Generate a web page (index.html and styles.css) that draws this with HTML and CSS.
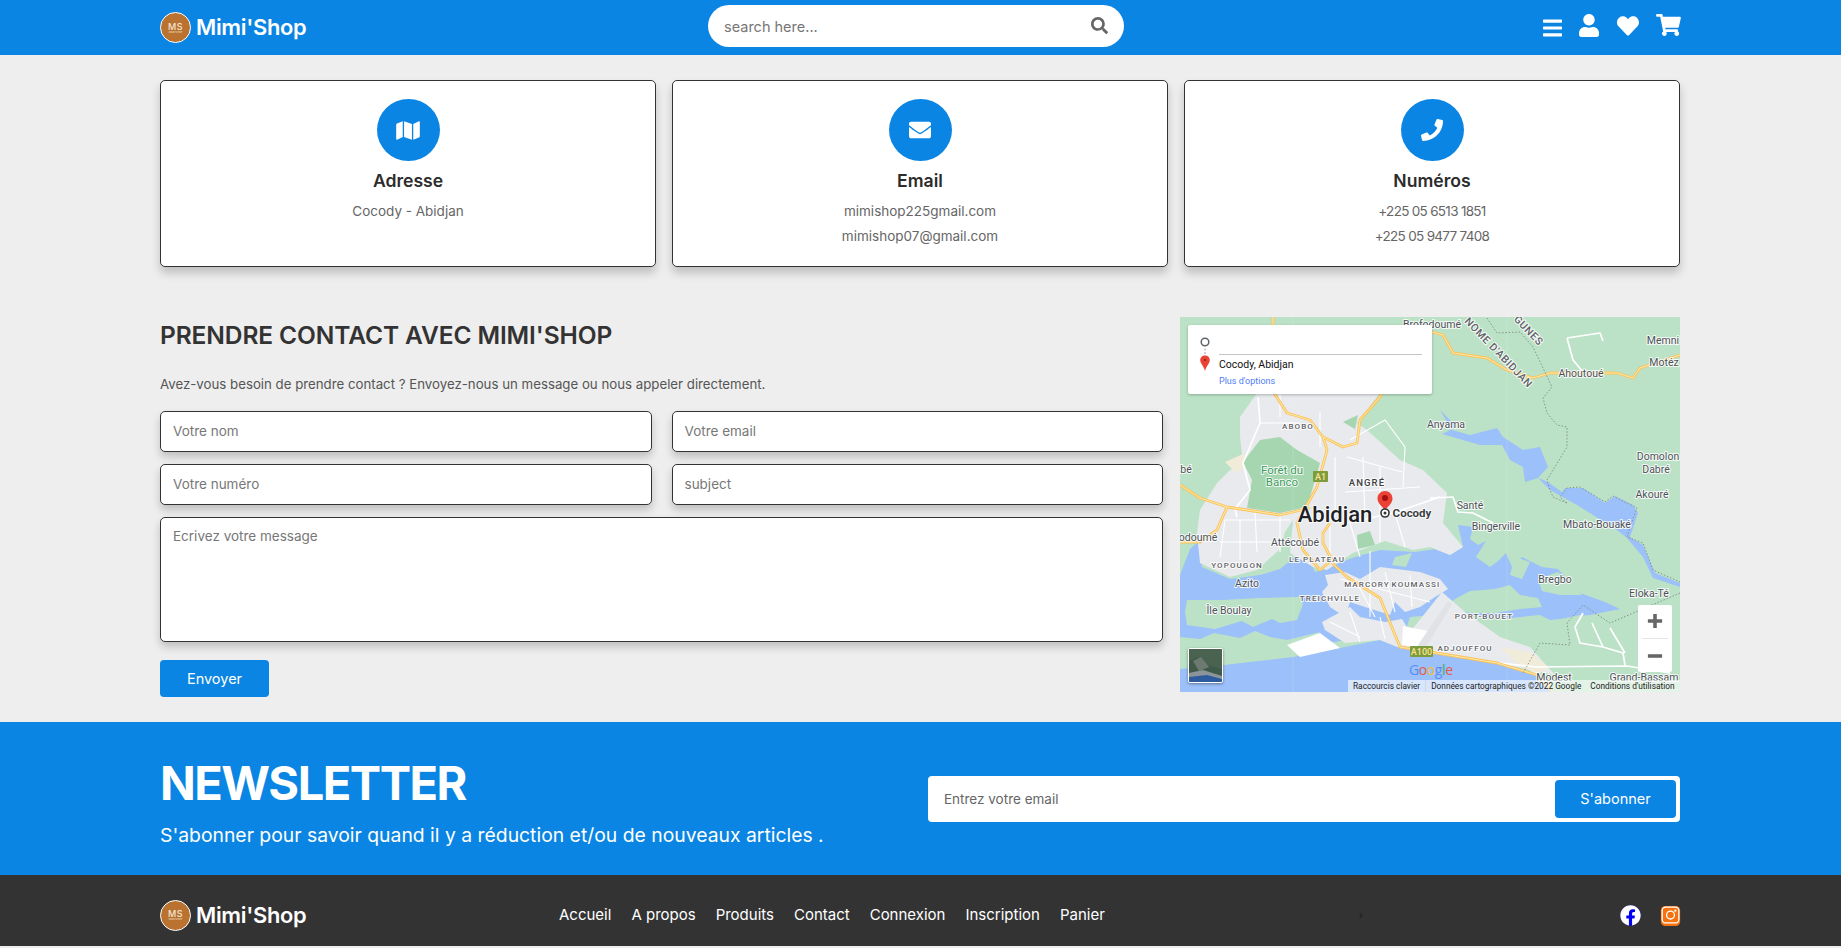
FILE: index.html
```html
<!DOCTYPE html>
<html lang="fr">
<head>
<meta charset="utf-8">
<title>Mimi'Shop - Contact</title>
<link rel="stylesheet" href="styles.css">
</head>
<body>
<header class="topbar">
  <a class="logo">
    <span class="logo-badge"><span class="logo-ms">MS</span><span class="logo-sub">MIMI'SHOP</span></span>
    <span class="logo-text">Mimi'Shop</span>
  </a>
  <form class="search">
    <input class="search-input" type="text" placeholder="search here...">
    <svg class="search-icon" viewBox="0 0 512 512"><path d="M505 442.7L405.3 343c-4.5-4.5-10.6-7-17-7H372c27.6-35.3 44-79.7 44-128C416 93.1 322.9 0 208 0S0 93.1 0 208s93.1 208 208 208c48.3 0 92.7-16.4 128-44v16.3c0 6.4 2.5 12.5 7 17l99.7 99.7c9.4 9.4 24.6 9.4 33.9 0l28.3-28.3c9.4-9.4 9.4-24.6.1-34zM208 336c-70.7 0-128-57.2-128-128 0-70.7 57.2-128 128-128 70.7 0 128 57.2 128 128 0 70.7-57.2 128-128 128z"/></svg>
  </form>
  <nav class="top-icons">
    <svg class="ti ti-bars" viewBox="0 0 448 512" preserveAspectRatio="none"><path d="M16 132h416c8.837 0 16-7.163 16-16V76c0-8.837-7.163-16-16-16H16C7.163 60 0 67.163 0 76v40c0 8.837 7.163 16 16 16zm0 160h416c8.837 0 16-7.163 16-16v-40c0-8.837-7.163-16-16-16H16c-8.837 0-16 7.163-16 16v40c0 8.837 7.163 16 16 16zm0 160h416c8.837 0 16-7.163 16-16v-40c0-8.837-7.163-16-16-16H16c-8.837 0-16 7.163-16 16v40c0 8.837 7.163 16 16 16z"/></svg>
    <svg class="ti ti-user" viewBox="0 0 448 512"><path d="M224 256c70.7 0 128-57.3 128-128S294.7 0 224 0 96 57.3 96 128s57.3 128 128 128zm89.6 32h-16.7c-22.2 10.2-46.9 16-72.9 16s-50.6-5.8-72.9-16h-16.7C60.2 288 0 348.2 0 422.4V464c0 26.5 21.5 48 48 48h352c26.5 0 48-21.5 48-48v-41.6c0-74.2-60.2-134.4-134.4-134.4z"/></svg>
    <svg class="ti ti-heart" viewBox="0 0 512 512"><path d="M462.3 62.6C407.5 15.9 326 24.3 275.7 76.2L256 96.5l-19.7-20.3C186.1 24.3 104.5 15.9 49.7 62.6c-62.8 53.6-66.1 149.8-9.9 207.9l193.5 199.8c12.5 12.9 32.8 12.9 45.3 0l193.5-199.8c56.3-58.1 53-154.3-9.8-207.9z"/></svg>
    <svg class="ti ti-cart" viewBox="0 0 576 512"><path d="M528.12 301.319l47.273-208C578.806 78.301 567.391 64 551.99 64H159.208l-9.166-44.81C147.758 8.021 137.93 0 126.529 0H24C10.745 0 0 10.745 0 24v16c0 13.255 10.745 24 24 24h69.883l70.248 343.435C147.325 417.1 136 435.222 136 456c0 30.928 25.072 56 56 56s56-25.072 56-56c0-15.674-6.447-29.835-16.824-40h209.647C430.447 426.165 424 440.326 424 456c0 30.928 25.072 56 56 56s56-25.072 56-56c0-22.172-12.888-41.332-31.579-50.405l5.517-24.276c3.413-15.018-8.002-29.319-23.403-29.319H218.117l-6.545-32h293.145c11.206 0 20.92-7.754 23.403-18.681z"/></svg>
  </nav>
</header>

<main class="page">
  <section class="cards">
    <article class="card">
      <span class="card-icon"><svg class="ci ci-map" viewBox="0 0 576 512"><path d="M0 117.66v346.32c0 11.32 11.43 19.06 21.94 14.86L160 416V32L20.12 87.95A32.006 32.006 0 0 0 0 117.66zM192 416l192 64V96L192 32v384zM554.06 33.16L416 96v384l139.88-55.95A31.996 31.996 0 0 0 576 394.34V48.02c0-11.32-11.43-19.06-21.94-14.86z"/></svg></span>
      <h3 class="card-title">Adresse</h3>
      <p class="card-line">Cocody - Abidjan</p>
    </article>
    <article class="card">
      <span class="card-icon"><svg class="ci ci-mail" viewBox="0 0 512 512"><path d="M502.3 190.8c3.9-3.1 9.7-.2 9.7 4.7V400c0 26.5-21.5 48-48 48H48c-26.5 0-48-21.5-48-48V195.6c0-5 5.7-7.8 9.7-4.7 22.4 17.4 52.1 39.5 154.1 113.6 21.1 15.4 56.7 47.8 92.2 47.6 35.7.3 72-32.8 92.3-47.6 102-74.1 131.6-96.3 154-113.7zM256 320c23.2.4 56.6-29.2 73.4-41.4 132.7-96.3 142.8-104.7 173.4-128.7 5.8-4.5 9.2-11.5 9.2-18.9v-19c0-26.5-21.5-48-48-48H48C21.5 64 0 85.5 0 112v19c0 7.4 3.4 14.3 9.2 18.9 30.6 23.9 40.7 32.4 173.4 128.7 16.8 12.2 50.2 41.8 73.4 41.4z"/></svg></span>
      <h3 class="card-title">Email</h3>
      <p class="card-line">mimishop225gmail.com</p>
      <p class="card-line">mimishop07@gmail.com</p>
    </article>
    <article class="card">
      <span class="card-icon"><svg class="ci ci-phone" viewBox="0 0 512 512"><path d="M493.4 24.6l-104-24c-11.3-2.6-22.9 3.3-27.5 13.9l-48 112c-4.2 9.8-1.4 21.3 6.9 28l60.6 49.6c-36 76.7-98.9 140.5-177.2 177.2l-49.6-60.6c-6.8-8.3-18.2-11.1-28-6.9l-112 48C3.9 366.5-2 378.1.6 389.4l24 104C27.1 504.2 36.7 512 48 512c256.1 0 464-207.5 464-464 0-11.2-7.7-20.9-18.6-23.4z"/></svg></span>
      <h3 class="card-title">Numéros</h3>
      <p class="card-line card-phone">+225 05 6513 1851</p>
      <p class="card-line card-phone">+225 05 9477 7408</p>
    </article>
  </section>

  <section class="contact">
    <form class="contact-form">
      <h2 class="contact-title">PRENDRE CONTACT AVEC MIMI'SHOP</h2>
      <p class="contact-intro">Avez-vous besoin de prendre contact ? Envoyez-nous un message ou nous appeler directement.</p>
      <div class="fields">
        <input class="field" type="text" placeholder="Votre nom">
        <input class="field" type="text" placeholder="Votre email">
        <input class="field" type="text" placeholder="Votre numéro">
        <input class="field" type="text" placeholder="subject">
        <textarea class="field field-area" placeholder="Ecrivez votre message"></textarea>
      </div>
      <button class="send" type="button">Envoyer</button>
    </form>

    <div class="map">
      <svg class="map-svg" viewBox="0 0 500 375" width="500" height="375">
        <rect class="m-land" width="500" height="375"/>
        <!-- north lagoons -->
        <path class="m-water" d="M260 93L277 110L262 117L300 128L322 128L330 143L343 150L345 165L358 161L370 173L397 188L437 213L447 221L463 240L473 261L500 270L500 266L475 256L463 228L450 220L458 196L453 188L435 179L425 186L403 171L385 171L380 178L387 181L397 186L368 165L358 161L368 150L360 130L343 133L323 120L317 111L290 118L272 113Z"/>
        <!-- main lagoon -->
        <path class="m-water" d="M0 258L10 232L18 225L22 250L50 262L80 258L100 252L115 240L112 205L122 225L135 255L175 240L200 233L235 235L255 232L270 238L283 230L278 208L293 210L290 222L298 228L306 224L296 240L310 250L318 244L326 236L332 250L342 240L362 250L378 252L392 268L400 276L425 285L440 292L400 300L360 304L320 300L290 300L262 300L240 310L0 352Z"/>
        <!-- sea -->
        <path class="m-water" d="M0 350L43 348L113 340L160 331L200 323L220 331L317 346L357 358L373 375L0 375Z"/>
        <!-- islands and south shore -->
        <path class="m-land" d="M7 283L43 283L80 281L120 280L123 287L117 303L100 306L92 302L73 310L62 304L35 312L7 308L5 295Z"/>
        <path class="m-land" d="M0 320L20 322L34 316L60 321L75 314L90 320L107 323L140 315L118 338L43 348L0 352Z"/>
        <path class="m-land" d="M273 283L290 274L315 272L330 268L340 278L358 281L362 290L340 292L315 296L290 296L272 292Z"/>
        <path class="m-land" d="M230 300L275 296L320 302L360 298L372 304L400 298L430 300L445 292L500 270L500 375L373 375L357 358L317 346L220 331Z"/>
        <path class="m-land" d="M358 262L378 255L395 270L402 278L380 278L362 274Z"/>
        <path class="m-land" d="M335 240L350 245L342 262L330 258Z"/>
        <!-- city -->
        <path class="m-city" d="M77 76L200 76L177 106L187 113L220 143L243 153L267 176L263 206L283 230L270 238L250 230L233 233L205 224L173 236L147 253L133 250L110 236L113 203L105 215L100 232L77 253L50 260L20 246L17 216L20 193L37 166L50 153L63 146L60 120L60 100Z"/>
        <path class="m-city" d="M145 258L165 255L180 262L200 250L240 255L260 262L268 272L255 280L240 290L225 295L215 285L210 298L185 290L170 285L165 300L150 290L142 275L148 268Z"/>
        <path class="m-city" d="M142 305L170 290L180 300L205 305L222 302L230 315L262 275L285 295L320 320L350 330L375 358L317 346L220 331L200 323L165 326L145 313Z"/>
        <path class="m-sand" d="M320 330L350 335L368 350L357 358L335 345Z"/>
        <path class="m-sand" d="M45 145L63 137L72 148L55 155Z"/>
        <path class="m-sandw" d="M107 328L140 316L160 331L120 340Z"/>
        <path class="m-sandw" d="M223 309L248 314L237 330L222 328Z"/>
        <path class="m-runway" d="M238 328L268 284L272 287L246 330Z"/>
        <path class="m-forest" d="M63 145L80 123L100 120L117 133L140 146L133 170L127 190L100 196L67 191L72 163Z"/>
        <path class="m-forest" d="M177 218L190 214L195 228L178 232Z"/>
        <path class="m-forest" d="M163 105L178 98L175 112Z"/>
        <path class="m-land" d="M215 240L232 236L226 250L212 248Z"/>
        <!-- seams -->
        <path class="m-seam" d="M113 0V375M327 0V375"/>
        <!-- white roads -->
        <path class="m-road-w" d="M78 80L80 106L63 146L70 173L55 192L57 200M167 206L213 196L260 180M250 181L273 180L278 195L293 196L313 206"/>
        <path class="m-road-t" d="M155 140L155 200M170 123L205 103L225 130L223 170M167 140L222 155M183 140L185 205M200 150L200 225M165 175L240 170M150 206L150 240M170 206L180 240M215 196L225 230M45 203H110M45 203L40 240M60 203L60 243M75 195L77 235M100 198L100 235M40 225H110M160 262L250 285M175 262L195 300M205 255L215 295M230 258L232 290M190 234L190 300M150 305L180 320M170 295L180 325M200 300L205 322M100 76L100 100M140 95L140 130M80 106H120"/>
        <path class="m-road-w" d="M387 21L420 16L423 24M387 21L393 43L403 55M403 296L395 310L400 326L423 330L443 336L445 348M320 346L357 350L447 349L490 356M412 306L423 330M430 311L445 336"/>
        <!-- motorways -->
        <g class="m-motor-o">
          <path d="M93 0V20L94 76L107 96L130 103L143 120L147 133L137 170L128 186L117 206L123 233L140 253L152 243L143 226L143 216L150 206"/>
          <path d="M143 120L163 130L177 126L180 103L200 80L205 70"/>
          <path d="M252 15L263 18L273 36L307 41L327 53L353 61L370 56L420 56L437 56L453 61L460 51L500 38"/>
          <path d="M0 168L20 181L47 190L67 193L100 198L130 191M47 190L37 213L20 225L0 225"/>
          <path d="M152 246L167 260L200 281L220 330L317 346L357 358L373 375"/>
        </g>
        <g class="m-motor-y">
          <path d="M93 0V20L94 76L107 96L130 103L143 120L147 133L137 170L128 186L117 206L123 233L140 253L152 243L143 226L143 216L150 206"/>
          <path d="M143 120L163 130L177 126L180 103L200 80L205 70"/>
          <path d="M252 15L263 18L273 36L307 41L327 53L353 61L370 56L420 56L437 56L453 61L460 51L500 38"/>
          <path d="M0 168L20 181L47 190L67 193L100 198L130 191M47 190L37 213L20 225L0 225"/>
          <path d="M152 246L167 260L200 281L220 330L317 346L357 358L373 375"/>
        </g>
        <!-- borders -->
        <path class="m-border" d="M307 1L317 16L340 15L353 30L372 70L363 81L367 96L377 108L387 110L387 130L367 163L370 173L373 180L387 186M387 186L380 180L387 171L400 170L425 185L433 179L457 191L450 210L447 220L463 226L473 253L500 265M500 276L430 306L403 288L387 306L390 328L360 326L343 356"/>
        <!-- shields -->
        <rect class="m-shield" x="133" y="154" width="15" height="11" rx="1"/>
        <text class="m-shield-t" x="140.500" y="163">A1</text>
        <rect class="m-shield" x="230" y="329" width="23" height="11" rx="1"/>
        <text class="m-shield-t" x="241.500" y="338">A100</text>
        <!-- labels -->
        <text class="l" x="252" y="11">Brofodoumé</text>
        <text class="l-caps l-road" transform="translate(316 38) rotate(46)">NOME D'ABIDJAN</text>
        <text class="l-caps l-road" transform="translate(346 16) rotate(46)">GUNES</text>
        <text class="l" x="483" y="27">Memni</text>
        <text class="l" x="484" y="49">Motéz</text>
        <text class="l" x="401" y="60">Ahoutoué</text>
        <text class="l" x="266" y="111">Anyama</text>
        <text class="l-caps" x="118" y="112">ABOBO</text>
        <text class="l-green" x="102" y="157">Forêt du</text>
        <text class="l-green" x="102" y="169">Banco</text>
        <text class="l-caps l-angre" x="187" y="169">ANGRÉ</text>
        <text class="l" x="290" y="192">Santé</text>
        <text class="l" x="478" y="143">Domolon</text>
        <text class="l" x="476" y="156">Dabré</text>
        <text class="l" x="472" y="181">Akouré</text>
        <text class="l" x="6" y="156">bé</text>
        <text class="l-big" x="155" y="205">Abidjan</text>
        <text class="l-bold" x="232" y="200">Cocody</text>
        <text class="l" x="316" y="213">Bingerville</text>
        <text class="l" x="417" y="211">Mbato-Bouaké</text>
        <text class="l" x="18" y="224">odoumé</text>
        <text class="l" x="115" y="229">Attécoubé</text>
        <text class="l-caps" x="137" y="245">LE PLATEAU</text>
        <text class="l-caps" x="57" y="251">YOPOUGON</text>
        <text class="l" x="67" y="270">Azito</text>
        <text class="l-caps" x="187" y="270">MARCORY</text>
        <text class="l-caps" x="236" y="270">KOUMASSI</text>
        <text class="l" x="375" y="266">Bregbo</text>
        <text class="l" x="469" y="280">Eloka-Té</text>
        <text class="l-caps" x="150" y="284">TREICHVILLE</text>
        <text class="l" x="49" y="297">Île Boulay</text>
        <text class="l-caps" x="304" y="302">PORT-BOUET</text>
        <text class="l-caps" x="285" y="334">ADJOUFFOU</text>
        <text class="l" x="374" y="364">Modest</text>
        <text class="l" x="464" y="364">Grand-Bassam</text>
        <!-- markers -->
        <path class="m-pin" d="M205 174c-4.200 0-7.500 3.300-7.500 7.500 0 5 5 8 7.500 12 2.500-4 7.500-7 7.500-12 0-4.200-3.300-7.500-7.500-7.500z"/>
        <circle class="m-pin-dot" cx="205" cy="181" r="3"/>
        <circle class="m-target" cx="205" cy="196" r="4"/>
        <circle class="m-target-dot" cx="205" cy="196" r="1.500"/>
      </svg>

      <div class="map-panel">
        <div class="mp-icons">
          <svg class="mp-svg" viewBox="0 0 14 44">
            <circle class="mp-ring" cx="7" cy="6" r="3.800"/>
            <circle class="mp-dot" cx="7" cy="13.500" r="0.900"/>
            <circle class="mp-dot" cx="7" cy="17" r="0.900"/>
            <path class="mp-pin" d="M7 19.500c-2.700 0-4.800 2-4.800 4.600 0 3.300 3.300 5.800 4.800 10.900 1.500-5.100 4.800-7.600 4.800-10.900 0-2.600-2.100-4.600-4.800-4.600z"/>
            <circle class="mp-pin-c" cx="7" cy="24" r="1"/>
          </svg>
        </div>
        <div class="mp-body">
          <div class="mp-line"></div>
          <div class="mp-place">Cocody, Abidjan</div>
          <div class="mp-more">Plus d'options</div>
        </div>
      </div>

      <div class="map-thumb"><svg class="thumb-svg" viewBox="0 0 33 33"><rect width="33" height="33" fill="#3f5a4a"/><path d="M0 0H33V20L18 16L8 8L0 12Z" fill="#4a6350"/><path d="M4 12L12 8L20 18L10 22Z" fill="#6d7a72"/><path d="M0 24L14 21L33 27V33H0Z" fill="#8b9499"/><path d="M0 28L18 26L33 30V33H0Z" fill="#2e5b9e"/></svg></div>

      <div class="map-zoom">
        <svg class="mz-icon" viewBox="0 0 18 18"><path d="M7 1h4v6h6v4h-6v6H7v-6H1V7h6z"/></svg>
        <span class="mz-sep"></span>
        <svg class="mz-icon" viewBox="0 0 18 18"><path d="M1 7h16v4H1z"/></svg>
      </div>

      <div class="map-google"><span class="g-b">G</span><span class="g-r">o</span><span class="g-y">o</span><span class="g-b">g</span><span class="g-g">l</span><span class="g-r">e</span></div>

      <div class="map-attr">
        <span class="attr-item">Raccourcis clavier</span>
        <span class="attr-item attr-data">Données cartographiques ©2022 Google</span>
        <span class="attr-item">Conditions d'utilisation</span>
      </div>
    </div>
  </section>
</main>

<section class="newsletter">
  <div class="nl-copy">
    <h1 class="nl-title">NEWSLETTER</h1>
    <p class="nl-sub">S'abonner pour savoir quand il y a réduction et/ou de nouveaux articles .</p>
  </div>
  <form class="nl-form">
    <input class="nl-input" type="text" placeholder="Entrez votre email">
    <button class="nl-btn" type="button">S'abonner</button>
  </form>
</section>

<footer class="footer">
  <a class="logo">
    <span class="logo-badge"><span class="logo-ms">MS</span><span class="logo-sub">MIMI'SHOP</span></span>
    <span class="logo-text">Mimi'Shop</span>
  </a>
  <nav class="foot-nav">
    <a class="foot-link">Accueil</a>
    <a class="foot-link">A propos</a>
    <a class="foot-link">Produits</a>
    <a class="foot-link">Contact</a>
    <a class="foot-link">Connexion</a>
    <a class="foot-link">Inscription</a>
    <a class="foot-link">Panier</a>
  </nav>
  <span class="foot-mark">&rsaquo;</span>
  <div class="socials">
    <svg class="social" viewBox="0 0 512 512"><circle class="fb-bg" cx="256" cy="256" r="248"/><path class="fb-fg" d="M504 256C504 119 393 8 256 8S8 119 8 256c0 123.780 90.690 226.380 209.250 245V327.690h-63V256h63v-54.640c0-62.150 37-96.480 93.670-96.480 27.140 0 55.520 4.840 55.520 4.840v61h-31.280c-30.800 0-40.410 19.120-40.410 38.730V256h68.780l-11 71.690h-57.780V501C413.310 482.380 504 379.780 504 256z"/></svg>
    <svg class="social" viewBox="0 0 24 24"><rect class="ig-bg" x="1" y="1" width="22" height="23" rx="5"/><rect class="ig-line" x="2.500" y="2.500" width="19" height="18" rx="4"/><circle class="ig-line" cx="12" cy="11.500" r="4.500"/><circle class="ig-dot" cx="17.500" cy="6.500" r="1.300"/></svg>
  </div>
</footer>
</body>
</html>
```
FILE: styles.css
```css
* { box-sizing: border-box; }
html, body { margin: 0; padding: 0; }
body {
  height: 948px;
  overflow: hidden;
  background: #eeeeee;
  font-family: Inter, "Open Sans", "Liberation Sans", sans-serif;
  color: #333;
}
input, textarea, button { font-family: inherit; }
input:focus, textarea:focus { outline: none; }

/* logo */
.logo { display: flex; align-items: center; gap: 5px; width: 145px; color: #fff; }
.logo-badge {
  width: 31px; height: 31px; flex: none;
  border-radius: 50%;
  background: #b9722f;
  border: 1.5px solid #fff;
  display: flex; flex-direction: column; align-items: center; justify-content: center;
  color: #f4e6d6;
}
.logo-ms { font-size: 9px; line-height: 9px; font-weight: 500; letter-spacing: .5px; }
.logo-sub { font-size: 2.5px; line-height: 3px; }
.logo-text { font-size: 21.9px; font-weight: 600; letter-spacing: -.3px; line-height: 31px; }

/* header */
.topbar {
  height: 55px;
  background: #0a85e3;
  padding: 0 161px 0 160px;
  display: grid;
  grid-template-columns: 548px 416px 1fr;
  align-items: center;
}
.search {
  height: 42px;
  background: #fff;
  border-radius: 21px;
  display: flex; align-items: center;
  padding: 0 16px;
  margin-top: -3px;
}
.search-input {
  flex: 1; border: 0; background: none; padding: 0;
  font-size: 14.5px; color: #666;
}
.search-input::placeholder { color: #777; }
.search-icon { width: 17px; height: 17px; fill: #666; margin-top: -1px; }
.top-icons { display: flex; justify-content: flex-end; align-items: center; gap: 17.5px; margin-right: -1px; }
.ti { fill: #fff; display: block; }
.ti-bars { width: 19px; height: 22px; }
.ti-user { width: 20px; height: 23px; margin-top: -5px; }
.ti-heart { width: 22px; height: 22px; margin-top: -4px; }
.ti-cart { width: 25px; height: 22px; margin-top: -5px; }

/* main */
.page { padding: 25px 161px 25px 160px; }
.cards { display: grid; grid-template-columns: repeat(3, 1fr); gap: 16px; }
.card {
  height: 187px;
  background: #fff;
  border: 1px solid #333;
  border-radius: 5px;
  box-shadow: 0 6px 10px rgba(0, 0, 0, .2);
  padding-top: 18px;
  display: flex; flex-direction: column; align-items: center;
}
.card-icon {
  width: 63px; height: 62px;
  border-radius: 50%;
  background: #0a85e3;
  display: flex; align-items: center; justify-content: center;
}
.ci { fill: #fff; display: block; }
.ci-map { width: 24px; height: 21px; }
.ci-mail { width: 22px; height: 22px; }
.ci-phone { width: 22px; height: 22px; }
.card-title { margin: 8px 0 6px; font-size: 17.6px; line-height: 24px; font-weight: 600; color: #2c2c2c; }
.card-line { margin: 0; font-size: 13.5px; line-height: 25px; color: #666; }
.card-phone { letter-spacing: -.7px; }

/* contact */
.contact { display: grid; grid-template-columns: 1003px 500px; gap: 17px; margin-top: 50px; align-items: start; }
.contact-form { display: flex; flex-direction: column; align-items: flex-start; }
.contact-title { margin: 0; font-size: 24.5px; line-height: 36px; font-weight: 600; color: #333; letter-spacing: -.1px; }
.contact-intro { margin: 21px 0 0; font-size: 13.25px; line-height: 20px; color: #555; }
.fields {
  margin-top: 17px;
  width: 100%;
  display: grid;
  grid-template-columns: 1fr 1fr;
  grid-template-rows: 41px 41px 125px;
  column-gap: 20px;
  row-gap: 12px;
}
.field {
  width: 100%;
  border: 1px solid #333;
  border-radius: 5px;
  background: #fff;
  box-shadow: 0 5px 8px rgba(0, 0, 0, .2);
  padding: 0 12px 2px;
  font-size: 13.5px;
  color: #333;
}
.field::placeholder { color: #777; opacity: 1; }
.field-area { grid-column: 1 / 3; height: 125px; padding-top: 10px; resize: none; display: block; }
.send {
  margin-top: 18px;
  width: 109px; height: 37px;
  border: 0; border-radius: 4px;
  background: #0a85e3;
  color: #fff;
  font-size: 14.5px;
}

/* map */
.map { position: relative; width: 500px; height: 375px; overflow: hidden; background: #bbe2c6; }
.map-svg { display: block; }
.m-land { fill: #bbe2c6; }
.m-water { fill: #9cc0f9; }
.m-city { fill: #e8eaed; }
.m-sand { fill: #f1ecd9; }
.m-sandw { fill: #fff; }
.m-runway { fill: #e0e2e5; }
.m-forest { fill: #a5d6b0; }
.m-seam { fill: none; stroke: rgba(255, 255, 255, .15); stroke-width: 1; }
.m-road-w { fill: none; stroke: #fff; stroke-width: 1.7; stroke-linejoin: round; }
.m-road-t { fill: none; stroke: #fff; stroke-width: 1.1; }
.m-motor-o { fill: none; stroke: #fbc25a; stroke-width: 2.8; stroke-linejoin: round; }
.m-motor-y { fill: none; stroke: #feeaa9; stroke-width: 1; stroke-linejoin: round; }
.m-border { fill: none; stroke: #7f8a86; stroke-width: .9; stroke-dasharray: 1.500 1.800; }
.m-shield { fill: #7c9c3e; }
.m-shield-t { font: 500 9px Roboto, sans-serif; fill: #fde293; text-anchor: middle; }
.m-pin { fill: #ea4335; }
.m-pin-dot { fill: #a50e0e; }
.m-target { fill: #fff; stroke: #333; stroke-width: 1.600; }
.m-target-dot { fill: #333; }
.l, .l-caps, .l-green, .l-big, .l-bold {
  font-family: Roboto, sans-serif;
  text-anchor: middle;
  paint-order: stroke;
  stroke: rgba(255, 255, 255, .85);
  stroke-width: 2px;
  stroke-linejoin: round;
}
.l { font-size: 10.5px; fill: #4d5156; }
.l-caps { font-size: 8px; letter-spacing: 1.1px; fill: #5f6368; font-weight: 500; }
.l-road { font-size: 10.5px; letter-spacing: .6px; text-anchor: middle; }
.l-angre { font-size: 9.5px; fill: #3c4043; }
.l-green { font-size: 11.5px; fill: #3d9a5b; }
.l-big { font-size: 22px; font-weight: 500; fill: #202124; }
.l-bold { font-size: 11.5px; font-weight: 700; fill: #3c4043; }

.map-panel {
  position: absolute; left: 8px; top: 8px;
  width: 244px; height: 69px;
  background: #fff;
  border-radius: 2px;
  box-shadow: 0 1px 3px rgba(0, 0, 0, .25);
  display: flex;
}
.mp-icons { width: 31px; padding: 11px 0 0 10px; }
.mp-svg { width: 14px; height: 44px; display: block; }
.mp-ring { fill: none; stroke: #5f6368; stroke-width: 1.500; }
.mp-dot { fill: #bdbdbd; }
.mp-pin { fill: #ea4335; }
.mp-pin-c { fill: #7a1d14; }
.mp-body { flex: 1; padding: 29px 10px 0 0; font-family: Roboto, sans-serif; }
.mp-line { height: 1px; background: #c4c4c4; }
.mp-place { margin-top: 3px; font-size: 10.5px; line-height: 14px; color: #111; }
.mp-more { margin-top: 3px; font-size: 9px; line-height: 12px; color: #4f7df5; }

.map-thumb {
  position: absolute; left: 8px; top: 331px;
  width: 35px; height: 35px;
  border: 1px solid #fff;
  border-radius: 2px;
  box-shadow: 0 1px 3px rgba(0, 0, 0, .4);
  overflow: hidden;
}
.thumb-svg { display: block; width: 33px; height: 33px; }

.map-zoom {
  position: absolute; left: 458px; top: 288px;
  width: 34px; height: 67px;
  background: #fff;
  border-radius: 2px;
  display: flex; flex-direction: column; align-items: center; justify-content: space-between;
  padding: 8px 0;
}
.mz-icon { width: 16px; height: 16px; fill: #666; display: block; }
.mz-sep { width: 26px; height: 1px; background: #e6e6e6; }

.map-google {
  position: absolute; left: 229px; top: 344px;
  font: 500 14px/18px "Open Sans", sans-serif;
  letter-spacing: -.4px;
}
.g-b { color: #5b8def; }
.g-r { color: #e8574a; }
.g-y { color: #f5bf2e; }
.g-g { color: #44ad5f; }

.map-attr {
  position: absolute; right: 0; bottom: 0;
  width: 332px; height: 12px;
  background: rgba(255, 255, 255, .6);
  font: 8.3px/12px Roboto, sans-serif;
  color: #222;
  display: flex;
}
.attr-item { padding: 0 5px; white-space: nowrap; }
.attr-data { border-left: 1px solid #d0d8e0; padding-right: 4px; }

/* newsletter */
.newsletter {
  height: 153px;
  background: #0a85e3;
  padding: 2px 161px 0 160px;
  display: flex; align-items: center; justify-content: space-between;
  color: #fff;
}
.nl-title { margin: 0; font-size: 47px; line-height: 62px; font-weight: 700; letter-spacing: -1.5px; }
.nl-sub { margin: 8px 0 0; font-size: 19.35px; line-height: 26px; }
.nl-form {
  width: 752px; height: 46px;
  margin-top: -2px;
  background: #fff;
  border-radius: 4px;
  display: flex; align-items: center; padding: 4px 4px 4px 16px;
}
.nl-input { flex: 1; border: 0; padding: 0; font-size: 13.5px; color: #333; background: none; }
.nl-input::placeholder { color: #666; }
.nl-btn {
  width: 121px; height: 38px;
  border: 0; border-radius: 4px;
  background: #0a85e3;
  color: #fff;
  font-size: 14.5px;
}

/* footer */
.footer {
  height: 71px;
  background: #333;
  padding: 9px 161px 0 160px;
  display: flex; align-items: center;
}
.foot-nav { display: flex; gap: 20px; margin-left: 254px; }
.foot-link { color: #fff; font-size: 15px; line-height: 20px; }
.foot-mark { margin-left: 254px; color: #1c1c1c; font-size: 11px; }
.socials { margin-left: auto; margin-right: -1px; display: flex; gap: 19px; align-items: center; }
.social { width: 21px; height: 21px; display: block; }
.fb-bg { fill: #0000f5; }
.fb-fg { fill: #fff; }
.ig-bg { fill: #f4720f; }
.ig-line { fill: none; stroke: #fff; stroke-width: 1.500; }
.ig-dot { fill: #fff; }
```
